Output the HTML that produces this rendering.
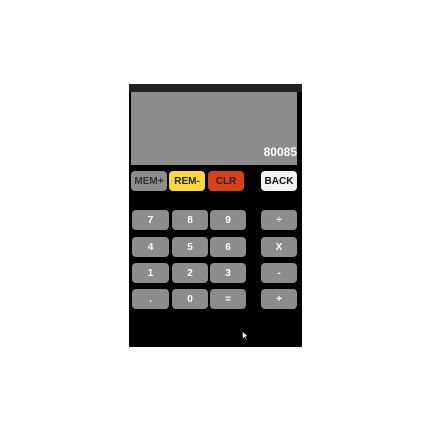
<!DOCTYPE html><html><head><style>
body{margin:0;width:432px;height:432px;background:#fff;position:relative;font-family:"Liberation Sans",sans-serif;overflow:hidden}
.f{position:absolute;left:129px;top:84px;width:173px;height:263px;background:#000}
.bar{position:absolute;left:129px;top:84px;width:173px;height:8px;background:#222}
.d{position:absolute;left:131px;top:92px;width:166px;height:73px;background:#8c8c8c}
.n{position:absolute;right:0;top:53px;color:#fff;font-weight:bold;font-size:12px}
.b{position:absolute;height:20px;border-radius:4px;background:#8c8c8c;color:#fff;font-weight:bold;font-size:10px;display:flex;align-items:center;justify-content:center}
</style></head><body>
<div class="f"></div><div class="bar"></div>
<div class="d"><div class="n">80085</div></div>
<div class="b" style="left:131px;top:171px;width:36px;color:#333">MEM+</div>
<div class="b" style="left:169px;top:171px;width:36px;background:#fcd83a;color:#222">REM-</div>
<div class="b" style="left:208px;top:171px;width:36px;background:#d9411a;color:#222">CLR</div>
<div class="b" style="left:261px;top:171px;width:36px;background:#f2f2f2;color:#111">BACK</div>
<div class="b" style="left:132px;top:210px;width:37px">7</div>
<div class="b" style="left:172px;top:210px;width:36px">8</div>
<div class="b" style="left:210px;top:210px;width:36px">9</div>
<div class="b" style="left:261px;top:210px;width:36px">÷</div>
<div class="b" style="left:132px;top:237px;width:37px">4</div>
<div class="b" style="left:172px;top:237px;width:36px">5</div>
<div class="b" style="left:210px;top:237px;width:36px">6</div>
<div class="b" style="left:261px;top:237px;width:36px">X</div>
<div class="b" style="left:132px;top:263px;width:37px">1</div>
<div class="b" style="left:172px;top:263px;width:36px">2</div>
<div class="b" style="left:210px;top:263px;width:36px">3</div>
<div class="b" style="left:261px;top:263px;width:36px">-</div>
<div class="b" style="left:132px;top:289px;width:37px">.</div>
<div class="b" style="left:172px;top:289px;width:36px">0</div>
<div class="b" style="left:210px;top:289px;width:36px">=</div>
<div class="b" style="left:261px;top:289px;width:36px">+</div>
<svg style="position:absolute;left:242px;top:331px" width="7" height="10"><path d="M0.5 0.5V8L2.5 6L4 9L5 8.5L3.5 5.5H6Z" fill="#fff" stroke="#000" stroke-width="0.5"/></svg>
</body></html>
